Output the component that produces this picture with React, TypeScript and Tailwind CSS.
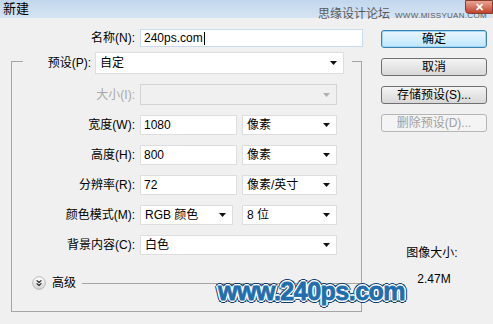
import React from 'react';

const FONT = "font-['Liberation_Sans','Noto_Sans_CJK_SC',sans-serif]";

const Arrow = ({ disabled = false }: { disabled?: boolean }) => (
  <svg width="7" height="4" viewBox="0 0 7 4" className="shrink-0">
    <path d="M0 0H7L3.5 4Z" fill={disabled ? '#b0b0b0' : '#111'} />
  </svg>
);

const Field = ({ value, width }: { value: string; width: string }) => (
  <div className={`${width} h-full bg-white border border-[#dedede] flex items-center pl-[3px] text-[12px] text-black`}>
    {value}
  </div>
);

const Select = ({ value, width, disabled = false }: { value: string; width: string; disabled?: boolean }) => (
  <div
    className={`${width} h-full border flex items-center justify-between pl-[4px] pr-[6px] text-[12px] ${
      disabled ? 'bg-[#f0f0f0] border-[#d4d4d4] text-[#999]' : 'bg-white border-[#dedede] text-black'
    }`}
  >
    <span>{value}</span>
    <Arrow disabled={disabled} />
  </div>
);

const Label = ({ text, disabled = false }: { text: string; disabled?: boolean }) => (
  <div className={`w-[128px] pr-[5px] text-right text-[12px] ${disabled ? 'text-[#a8a8a8]' : 'text-black'}`}>{text}</div>
);

const Button = ({ text, primary = false, disabled = false }: { text: string; primary?: boolean; disabled?: boolean }) => (
  <div
    className={`h-[18px] w-full rounded-[3px] border flex items-center justify-center text-[12px] ${
      primary
        ? 'border-[#3c7fb1] bg-gradient-to-b from-[#eaf6fd] to-[#bee6fd] text-black shadow-[inset_0_0_0_1px_#9fd8f5]'
        : disabled
          ? 'border-[#b5b5b5] bg-[#f4f4f4] text-[#a0a0a0]'
          : 'border-[#707070] bg-gradient-to-b from-[#f4f4f4] to-[#d8d8d8] text-black'
    }`}
  >
    {text}
  </div>
);

export default function App() {
  return (
    <div className={`relative w-[493px] h-[324px] bg-[#f0f0f0] overflow-hidden ${FONT}`}>
      {/* title bar */}
      <div className="h-[18px] flex items-start bg-gradient-to-b from-[#c2d7ed] to-[#d6e4f3]">
        <span className="pl-[3px] pt-[1px] text-[13px] leading-[15px] text-black">新建</span>
        <div className="ml-auto w-[28px] h-[14px] rounded-bl-[4px] bg-gradient-to-b from-[#e8a394] to-[#c0402a] border border-[#8a3a2c] flex items-center justify-center text-white text-[11px] font-bold leading-none">
          ✕
        </div>
      </div>

      <div className="flex">
        {/* left column */}
        <div className="w-[370px] flex flex-col">
          <div className="mt-[11px] h-[18px] flex items-center">
            <div className="w-[140px] pr-[5px] text-right text-[12px] text-black">名称(N):</div>
            <div className="w-[223px] h-full bg-white border border-[#c9dbeb] flex items-center pl-[3px] text-[12px] text-black">
              240ps.com<span className="w-px h-[13px] bg-black ml-px" />
            </div>
          </div>

          <div className="ml-[11px] mt-[14px] w-[351px] h-[251px] border border-[#a5a5a5] flex flex-col">
            <div className="-mt-[10px] ml-[11px] w-[329px] h-[22px] bg-[#f0f0f0] flex items-center">
              <div className="w-[72px] pr-[4px] text-right text-[12px] text-black">预设(P):</div>
              <Select value="自定" width="w-[249px]" />
            </div>

            <div className="mt-[10px] h-[21px] flex items-center">
              <Label text="大小(I):" disabled />
              <Select value="" width="w-[197px]" disabled />
            </div>

            <div className="mt-[10px] h-[20px] flex items-center">
              <Label text="宽度(W):" />
              <Field value="1080" width="w-[97px]" />
              <div className="w-[5px]" />
              <Select value="像素" width="w-[95px]" />
            </div>

            <div className="mt-[10px] h-[20px] flex items-center">
              <Label text="高度(H):" />
              <Field value="800" width="w-[97px]" />
              <div className="w-[5px]" />
              <Select value="像素" width="w-[95px]" />
            </div>

            <div className="mt-[10px] h-[20px] flex items-center">
              <Label text="分辨率(R):" />
              <Field value="72" width="w-[97px]" />
              <div className="w-[5px]" />
              <Select value="像素/英寸" width="w-[95px]" />
            </div>

            <div className="mt-[10px] h-[20px] flex items-center">
              <Label text="颜色模式(M):" />
              <Select value="RGB 颜色" width="w-[93px]" />
              <div className="w-[9px]" />
              <Select value="8 位" width="w-[95px]" />
            </div>

            <div className="mt-[10px] h-[20px] flex items-center">
              <Label text="背景内容(C):" />
              <Select value="白色" width="w-[197px]" />
            </div>

            <div className="mt-[21px] h-[14px] flex items-center">
              <svg width="14" height="14" viewBox="0 0 14 14" className="ml-[20px] shrink-0">
                <defs>
                  <linearGradient id="adv" x1="0" y1="0" x2="0" y2="1">
                    <stop offset="0" stopColor="#ffffff" />
                    <stop offset="1" stopColor="#d4d4d4" />
                  </linearGradient>
                </defs>
                <circle cx="7" cy="7" r="6.3" fill="url(#adv)" stroke="#a8a8a8" strokeWidth="0.8" />
                <path d="M4.6 4.4L7 6.4L9.4 4.4M4.6 7.4L7 9.4L9.4 7.4" fill="none" stroke="#222" strokeWidth="1.2" />
              </svg>
              <span className="ml-[6px] text-[12px] text-black">高级</span>
              <div className="ml-[6px] flex-1 h-px bg-[#a5a5a5]" />
            </div>
          </div>
        </div>

        {/* right column */}
        <div className="ml-[11px] w-[106px] flex flex-col">
          <div className="mt-[12px] flex flex-col gap-[10px]">
            <Button text="确定" primary />
            <Button text="取消" />
            <Button text="存储预设(S)..." />
            <Button text="删除预设(D)..." disabled />
          </div>
          <div className="mt-[114px] text-center text-[12px] leading-[14px] text-black pr-[4px]">图像大小:</div>
          <div className="mt-[12px] text-center text-[12px] leading-[14px] text-black">2.47M</div>
        </div>
      </div>

      {/* watermarks */}
      <div className="absolute left-[318px] top-[7px] flex items-end gap-[5px] text-[#5a5a5a]">
        <span className="text-[12px] leading-[14px]">思缘设计论坛</span>
        <span className="text-[8px] leading-[11px] tracking-[0.3px]">WWW.MISSYUAN.COM</span>
      </div>
      <div className="absolute left-[218px] top-[276px] text-[25px] font-bold tracking-[-0.5px] text-[#1f6fae] leading-[30px] [-webkit-text-stroke:0.8px_#1f6fae] [text-shadow:-1px_-1px_0_#fff,1px_-1px_0_#fff,-1px_1px_0_#fff,1px_1px_0_#fff,0_-2px_0_#fff,0_2px_0_#fff,-2px_0_0_#fff,2px_0_0_#fff,-2px_-2px_0_#0f3f6e,2px_-2px_0_#0f3f6e,-2px_2px_0_#0f3f6e,2px_2px_0_#0f3f6e,0_3px_0_#0f3f6e,3px_0_0_#0f3f6e,-3px_0_0_#0f3f6e,0_-3px_0_#0f3f6e]">
        www.240ps.com
      </div>
    </div>
  );
}
